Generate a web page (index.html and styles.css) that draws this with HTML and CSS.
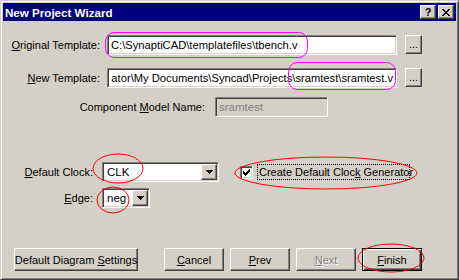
FILE: index.html
```html
<!DOCTYPE html>
<html>
<head>
<meta charset="utf-8">
<link rel="stylesheet" href="styles.css">
</head>
<body>
<div class="window">
  <div class="titlebar">
    <span class="title">New Project Wizard</span>
    <div class="tbtns">
      <div class="tbtn help">?</div>
      <div class="tbtn close">
        <svg width="8" height="7" viewBox="0 0 8 7" shape-rendering="crispEdges"><path d="M0 0h2v1h-2z M6 0h2v1h-2z M1 1h2v1h-2z M5 1h2v1h-2z M2 2h4v1h-4z M3 3h2v1h-2z M2 4h4v1h-4z M1 5h2v1h-2z M5 5h2v1h-2z M0 6h2v1h-2z M6 6h2v1h-2z" fill="#000"/></svg>
      </div>
    </div>
  </div>
  <div class="content">
    <div class="row r1">
      <label class="lbl lbl-main"><u>O</u>riginal Template:</label>
      <div class="field path"><span>C:\SynaptiCAD\templatefiles\tbench.v</span></div>
      <div class="btn browse"><span>...</span></div>
    </div>
    <div class="row r2">
      <label class="lbl lbl-main"><u>N</u>ew Template:</label>
      <div class="field path end"><span>ator\My Documents\Syncad\Projects\sramtest\sramtest.v</span></div>
      <div class="btn browse"><span>...</span></div>
    </div>
    <div class="row r3">
      <label class="lbl lbl-model">Component <u>M</u>odel Name:</label>
      <div class="field disabled"><span>sramtest</span></div>
    </div>
    <div class="row r4">
      <label class="lbl lbl-clock"><u>D</u>efault Clock:</label>
      <div class="field combo combo-clock">
        <span class="ctext">CLK</span>
        <div class="btn drop"><svg width="7" height="4" viewBox="0 0 7 4" shape-rendering="crispEdges"><path d="M0 0h7v1h-7z M1 1h5v1h-5z M2 2h3v1h-3z M3 3h1v1h-1z" fill="#000"/></svg></div>
      </div>
      <div class="check">
        <div class="box"><svg width="7" height="7" viewBox="0 0 7 7" shape-rendering="crispEdges"><path d="M0 2h1v3h-1z M1 3h1v3h-1z M2 4h1v3h-1z M3 3h1v3h-1z M4 2h1v3h-1z M5 1h1v3h-1z M6 0h1v3h-1z" fill="#000"/></svg></div>
        <span class="focus">Create Default Cloc<u>k</u> Generator</span>
      </div>
    </div>
    <div class="row r5">
      <label class="lbl lbl-clock"><u>E</u>dge:</label>
      <div class="field combo combo-edge">
        <span class="ctext">neg</span>
        <div class="btn drop"><svg width="7" height="4" viewBox="0 0 7 4" shape-rendering="crispEdges"><path d="M0 0h7v1h-7z M1 1h5v1h-5z M2 2h3v1h-3z M3 3h1v1h-1z" fill="#000"/></svg></div>
      </div>
    </div>
    <div class="row buttons">
      <div class="btn push wide"><span>Default Diagram <u>S</u>ettings</span></div>
      <div class="btn push cancel"><span><u>C</u>ancel</span></div>
      <div class="btn push"><span><u>P</u>rev</span></div>
      <div class="btn push disabled-btn"><span><u>N</u>ext</span></div>
      <div class="btn push default"><span><u>F</u>inish</span></div>
    </div>
  </div>
</div>
<svg class="marks" width="459" height="280" viewBox="0 0 459 280">
  <rect x="105.5" y="32.5" width="202" height="25" rx="9" fill="none" stroke="#ff00ff" stroke-width="1"/>
  <rect x="288.5" y="62.5" width="107" height="27" rx="9" fill="none" stroke="#ff00ff" stroke-width="1"/>
  <ellipse cx="118" cy="168.5" rx="25" ry="14.5" fill="none" stroke="#ff0000" stroke-width="1"/>
  <ellipse cx="113" cy="200" rx="16" ry="13" fill="none" stroke="#ff0000" stroke-width="1"/>
  <ellipse cx="326" cy="173" rx="91" ry="16" fill="none" stroke="#ff0000" stroke-width="1"/>
  <ellipse cx="391" cy="258" rx="33" ry="14" fill="none" stroke="#ff0000" stroke-width="1"/>
</svg>
</body>
</html>
```
FILE: styles.css
```css
* { box-sizing: border-box; }
html, body { margin: 0; padding: 0; }
body {
  position: relative;
  width: 459px;
  height: 280px;
  overflow: hidden;
  background: #d4d0c8;
  font-family: "Liberation Sans", Arial, sans-serif;
  font-size: 11px;
  color: #000;
}
.window {
  width: 459px;
  height: 280px;
  background: #d4d0c8;
  border: 1px solid;
  border-color: #d4d0c8 #404040 #404040 #d4d0c8;
  box-shadow: inset 1px 1px #fff, inset -1px -1px #808080;
  padding: 2px;
  display: flex;
  flex-direction: column;
}
.titlebar {
  height: 18px;
  background: #000080;
  display: flex;
  align-items: center;
  justify-content: space-between;
  padding: 0 2px 0 2px;
}
.title {
  color: #fff;
  font-weight: bold;
  font-size: 11.6px;
}
.tbtns { display: flex; gap: 2px; }
.tbtn {
  width: 16px;
  height: 14px;
  background: #d4d0c8;
  border: 1px solid;
  border-color: #fff #404040 #404040 #fff;
  box-shadow: inset -1px -1px #808080;
  display: flex;
  align-items: center;
  justify-content: center;
  font-weight: bold;
  font-size: 11px;
  line-height: 1;
}
.content {
  display: flex;
  flex-direction: column;
}
.row { display: flex; align-items: center; }
.r1 { margin-top: 14px; }
.r2 { margin-top: 13px; }
.r3 { margin-top: 9px; }
.r4 { margin-top: 45px; }
.r5 { margin-top: 6px; }
.buttons { margin-top: 40px; padding-left: 11px; }
.lbl { text-align: right; white-space: nowrap; flex: none; }
.lbl-main { width: 97px; margin-right: 7px; }
.lbl-model { width: 202px; margin-right: 10px; }
.lbl-clock { width: 90px; margin-right: 9px; }
.field {
  height: 20px;
  background: #fff;
  border: 1px solid;
  border-color: #808080 #fff #fff #808080;
  box-shadow: inset 1px 1px #404040, inset -1px -1px #d4d0c8;
  padding: 0 3px;
  display: flex;
  align-items: center;
  overflow: hidden;
  white-space: nowrap;
  flex: none;
}
.path { width: 290px; font-size: 11.2px; }
.end { justify-content: flex-end; padding-right: 3px; }
.end span { flex: none; }
.disabled { width: 113px; background: #d4d0c8; color: #808080; font-size: 11.5px; }
.btn {
  background: #d4d0c8;
  border: 1px solid;
  border-color: #fff #404040 #404040 #fff;
  box-shadow: inset -1px -1px #808080;
  display: flex;
  align-items: center;
  justify-content: center;
  flex: none;
  white-space: nowrap;
}
.browse {
  width: 17px;
  height: 19px;
  margin-left: 8px;
  align-self: flex-start;
  font-size: 11px;
  padding-bottom: 2px;
}
.combo { padding: 1px; font-size: 11.5px; }
.combo-clock { width: 117px; }
.combo-edge { width: 48px; }
.ctext { flex: 1; padding-left: 3px; }
.drop { width: 16px; height: 16px; }
.check { display: flex; align-items: center; margin-left: 21px; }
.box {
  width: 13px;
  height: 13px;
  background: #fff;
  border: 1px solid;
  border-color: #808080 #fff #fff #808080;
  box-shadow: inset 1px 1px #404040, inset -1px -1px #d4d0c8;
  display: flex;
  align-items: center;
  justify-content: center;
}
.focus {
  margin-left: 4px;
  border: 1px dotted #000;
  padding: 1px 1px;
  width: 153px;
  font-size: 11px;
  white-space: nowrap;
}
.push { height: 23px; width: 60px; margin-left: 6px; }
.push.wide { width: 124px; margin-left: 0; }
.push.cancel { margin-left: 26px; }
.disabled-btn { color: #808080; text-shadow: 1px 1px #fff; }
.default {
  border-color: #000;
  box-shadow: inset 1px 1px #fff, inset -1px -1px #404040, inset -2px -2px #808080;
}
.marks { position: absolute; left: 0; top: 0; pointer-events: none; }
```
